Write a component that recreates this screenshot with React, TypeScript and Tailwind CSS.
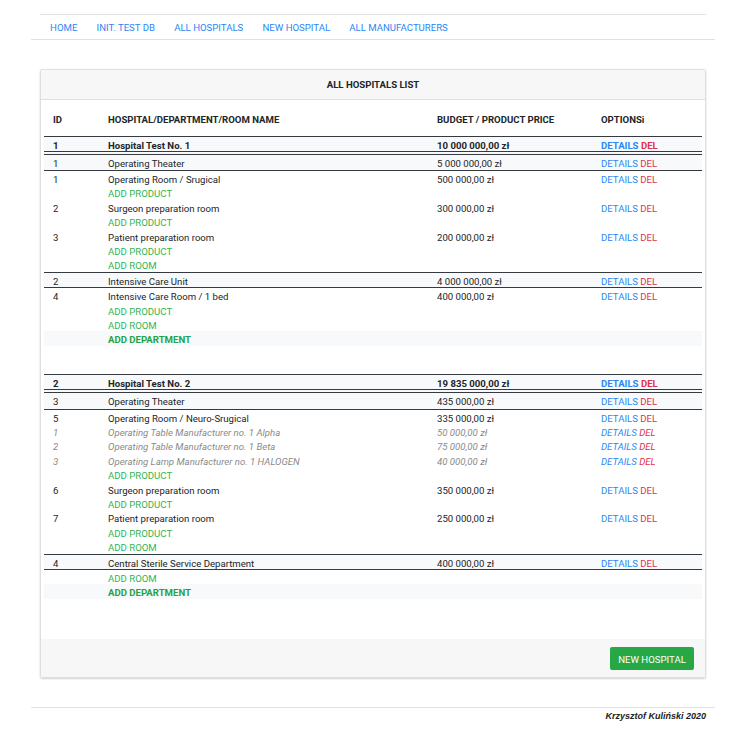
import React from 'react';

type Row =
  | { kind: 'hospital'; id: number; name: string; budget: string }
  | { kind: 'dept'; id: number; name: string; budget: string; first?: boolean }
  | { kind: 'room'; id: number; name: string; budget: string }
  | { kind: 'product'; id: number; name: string; budget: string }
  | { kind: 'add'; label: string }
  | { kind: 'addDept' }
  | { kind: 'spacer' };

const rows: Row[] = [
  { kind: 'hospital', id: 1, name: 'Hospital Test No. 1', budget: '10 000 000,00 zł' },
  { kind: 'dept', id: 1, name: 'Operating Theater', budget: '5 000 000,00 zł', first: true },
  { kind: 'room', id: 1, name: 'Operating Room / Srugical', budget: '500 000,00 zł' },
  { kind: 'add', label: 'ADD PRODUCT' },
  { kind: 'room', id: 2, name: 'Surgeon preparation room', budget: '300 000,00 zł' },
  { kind: 'add', label: 'ADD PRODUCT' },
  { kind: 'room', id: 3, name: 'Patient preparation room', budget: '200 000,00 zł' },
  { kind: 'add', label: 'ADD PRODUCT' },
  { kind: 'add', label: 'ADD ROOM' },
  { kind: 'dept', id: 2, name: 'Intensive Care Unit', budget: '4 000 000,00 zł' },
  { kind: 'room', id: 4, name: 'Intensive Care Room / 1 bed', budget: '400 000,00 zł' },
  { kind: 'add', label: 'ADD PRODUCT' },
  { kind: 'add', label: 'ADD ROOM' },
  { kind: 'addDept' },
  { kind: 'spacer' },
  { kind: 'hospital', id: 2, name: 'Hospital Test No. 2', budget: '19 835 000,00 zł' },
  { kind: 'dept', id: 3, name: 'Operating Theater', budget: '435 000,00 zł', first: true },
  { kind: 'room', id: 5, name: 'Operating Room / Neuro-Srugical', budget: '335 000,00 zł' },
  { kind: 'product', id: 1, name: 'Operating Table Manufacturer no. 1 Alpha', budget: '50 000,00 zł' },
  { kind: 'product', id: 2, name: 'Operating Table Manufacturer no. 1 Beta', budget: '75 000,00 zł' },
  { kind: 'product', id: 3, name: 'Operating Lamp Manufacturer no. 1 HALOGEN', budget: '40 000,00 zł' },
  { kind: 'add', label: 'ADD PRODUCT' },
  { kind: 'room', id: 6, name: 'Surgeon preparation room', budget: '350 000,00 zł' },
  { kind: 'add', label: 'ADD PRODUCT' },
  { kind: 'room', id: 7, name: 'Patient preparation room', budget: '250 000,00 zł' },
  { kind: 'add', label: 'ADD PRODUCT' },
  { kind: 'add', label: 'ADD ROOM' },
  { kind: 'dept', id: 4, name: 'Central Sterile Service Department', budget: '400 000,00 zł' },
  { kind: 'add', label: 'ADD ROOM' },
  { kind: 'addDept' },
];

const grid = 'grid grid-cols-[55px_329px_164px_1fr]';
// pt nudges the text 1px lower inside the fixed row height
const cell = 'pl-[9px] pt-[2px] whitespace-nowrap';

function Options({ bold }: { bold?: boolean }) {
  return (
    <span className={bold ? 'font-bold' : ''}>
      <span className="text-[#2a87f5]">DETAILS</span> <span className="text-[#e0324b]">DEL</span>
    </span>
  );
}

function TableRow({ row, index }: { row: Row; index: number }) {
  if (row.kind === 'spacer') return <div className="h-[28px]" />;

  if (row.kind === 'hospital') {
    return (
      <div className={`${grid} h-[19px] border-t border-b-[4px] border-double border-[#343a40] bg-[#f8f9fa] font-bold items-center`}>
        <div className={cell}>{row.id}</div>
        <div className={cell}>{row.name}</div>
        <div className={cell}>{row.budget}</div>
        <div className={cell}><Options bold /></div>
      </div>
    );
  }

  if (row.kind === 'dept') {
    const h = row.first ? (index > 10 ? 'h-[17px] border-b' : 'h-[16px] border-b') : 'h-[16.4px] border-y';
    return (
      <div className={`${grid} ${h} border-[#343a40] bg-[#f8f9fa] items-center`}>
        <div className={cell}>{row.id}</div>
        <div className={cell}>{row.name}</div>
        <div className={cell}>{row.budget}</div>
        <div className={cell}><Options /></div>
      </div>
    );
  }

  if (row.kind === 'room' || row.kind === 'product') {
    const product = row.kind === 'product';
    return (
      <div className={`${grid} h-[14.4px] items-center ${product ? 'italic text-[#8a8a8a]' : ''}`}>
        <div className={cell}>{row.id}</div>
        <div className={cell}>{row.name}</div>
        <div className={cell}>{row.budget}</div>
        <div className={cell}><Options /></div>
      </div>
    );
  }

  if (row.kind === 'add') {
    return (
      <div className={`${grid} h-[14.4px] items-center`}>
        <div />
        <div className={`${cell} text-[#2fb552]`}>{row.label}</div>
      </div>
    );
  }

  return (
    <div className={`${grid} h-[14.4px] items-center bg-[#f8f9fa]`}>
      <div />
      <div className={`${cell} font-bold text-[#23a347]`}>ADD DEPARTMENT</div>
    </div>
  );
}

export default function App() {
  const navItems = ['HOME', 'INIT. TEST DB', 'ALL HOSPITALS', 'NEW HOSPITAL', 'ALL MANUFACTURERS'];

  return (
    <div className="min-h-[735px] bg-white font-['Roboto',sans-serif] text-[9.6px] text-[#212529]">
      <div className="ml-[31px] w-[684px] pt-[14px]">
        {/* Nav */}
        <div className="mx-[9px] border-t border-[#dee2e6]" />
        <nav className="flex h-[25px] items-center border-b border-[#dee2e6] pl-[9.5px] pt-[3px]">
          {navItems.map(item => (
            <a key={item} className="px-[9.6px] text-[9.6px] text-[#2a87f5]">
              {item}
            </a>
          ))}
        </nav>

        {/* Card */}
        <div className="mx-[9px] mt-[29px] border border-[#dfdfdf] shadow-[0_1px_2px_rgba(0,0,0,0.18)] rounded-[2px]">
          <div className="flex h-[30px] items-center justify-center border-b border-[#dfdfdf] bg-[#f7f7f7] pt-[2px] font-bold">
            ALL HOSPITALS LIST
          </div>

          <div className="px-[3px] pb-[40px]">
            <div className={`${grid} h-[36px] items-center pt-[2px] font-bold`}>
              <div className={cell}>ID</div>
              <div className={cell}>HOSPITAL/DEPARTMENT/ROOM NAME</div>
              <div className={cell}>BUDGET / PRODUCT PRICE</div>
              <div className={cell}>OPTIONSi</div>
            </div>
            {rows.map((row, i) => (
              <TableRow key={i} row={row} index={i} />
            ))}
          </div>

          <div className="flex h-[38px] items-center justify-end bg-[#f7f7f7] pr-[11px] pt-[1px]">
            <button className="h-[23px] w-[84px] rounded-[2px] bg-[#28a745] pt-[3px] text-[9.6px] text-white">
              NEW HOSPITAL
            </button>
          </div>
        </div>

        {/* Footer */}
        <div className="mt-[29px] border-t border-[#dee2e6]">
          <div className="pr-[9px] pt-[2px] text-right font-['Liberation_Sans',Arial,sans-serif] text-[9px] font-bold italic text-[#222]">
            Krzysztof Kuliński 2020
          </div>
        </div>
      </div>
    </div>
  );
}
